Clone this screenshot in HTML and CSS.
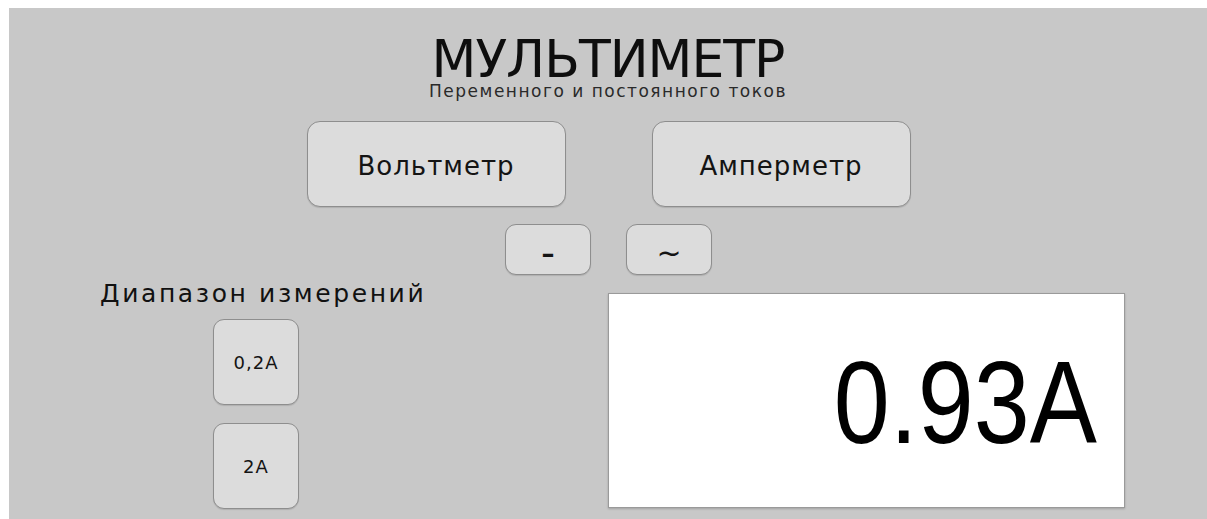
FILE: index.html
```html
<!DOCTYPE html>
<html lang="ru">
<head>
<meta charset="utf-8">
<title>Мультиметр</title>
<link rel="stylesheet" href="styles.css">
</head>
<body>
  <main class="panel">
    <header class="head">
      <h1 class="title">МУЛЬТИМЕТР</h1>
      <p class="subtitle">Переменного и постоянного токов</p>
    </header>

    <div class="modes">
      <button class="btn btn-mode">Вольтметр</button>
      <button class="btn btn-mode">Амперметр</button>
    </div>

    <div class="kinds">
      <button class="btn btn-kind btn-dc">–</button>
      <button class="btn btn-kind">~</button>
    </div>

    <section class="lower">
      <div class="ranges">
        <h2 class="ranges-label">Диапазон измерений</h2>
        <button class="btn btn-range">0,2A</button>
        <button class="btn btn-range">2A</button>
      </div>
      <div class="display">
        <span class="reading">0.93A</span>
      </div>
    </section>
  </main>
</body>
</html>
```

FILE: styles.css
```css
html {
  overflow: hidden;
  background: #ffffff;
}

body {
  margin: 8px 0 0 9px;
  font-family: "DejaVu Sans", Verdana, sans-serif;
  color: #111111;
}

.panel {
  width: 1198px;
  height: 530px;
  background: #c8c8c8;
  display: flex;
  flex-direction: column;
  align-items: center;
}

.head {
  display: flex;
  flex-direction: column;
  align-items: center;
  padding-top: 27px;
}

.title {
  margin: 0;
  font-size: 52px;
  line-height: 48px;
  font-weight: normal;
  letter-spacing: -1px;
  color: #0e0e0e;
}

.subtitle {
  margin: 0;
  font-size: 17px;
  line-height: 17px;
  letter-spacing: 1.5px;
  color: #2a2a2a;
}

.btn {
  font-family: "DejaVu Sans", Verdana, sans-serif;
  background: #dcdcdc;
  border: 1px solid #8e8e8e;
  box-shadow: 0 1px 1px rgba(0, 0, 0, 0.12);
  color: #141414;
  padding: 0;
}

.modes {
  display: flex;
  gap: 86px;
  margin-top: 21px;
  margin-left: 1px;
}

.btn-mode {
  width: 259px;
  height: 86px;
  border-radius: 13px;
  font-size: 26px;
  letter-spacing: 1px;
  padding-top: 3px;
}

.kinds {
  display: flex;
  gap: 35px;
  margin-top: 17px;
  margin-left: 1px;
}

.btn-kind {
  width: 86px;
  height: 51px;
  border-radius: 11px;
  font-size: 30px;
  line-height: 1;
  padding-top: 6px;
}

.btn-dc {
  font-weight: bold;
  font-size: 26px;
  padding-top: 8px;
}

.lower {
  align-self: stretch;
  display: flex;
  align-items: flex-start;
}

.ranges {
  width: 599px;
  display: flex;
  flex-direction: column;
  align-items: flex-start;
}

.ranges-label {
  margin: 6px 0 0 91px;
  font-size: 25px;
  line-height: 1;
  font-weight: normal;
  letter-spacing: 2.6px;
  color: #111111;
}

.btn-range {
  width: 86px;
  height: 86px;
  border-radius: 11px;
  margin-left: 204px;
  font-size: 18px;
  letter-spacing: 1px;
}

.ranges-label + .btn-range {
  margin-top: 13px;
}

.btn-range + .btn-range {
  margin-top: 18px;
}

.display {
  margin-top: 18px;
  width: 517px;
  height: 215px;
  box-sizing: border-box;
  background: #ffffff;
  border: 1px solid #9a9a9a;
  box-shadow: 0 1px 2px rgba(0, 0, 0, 0.2);
  display: flex;
  align-items: center;
  justify-content: flex-end;
  padding-right: 27px;
}

.reading {
  font-family: "Liberation Sans", Arial, sans-serif;
  font-size: 117px;
  line-height: 1;
  color: #000000;
  margin-top: 4px;
  transform: scaleX(0.86);
  transform-origin: right center;
}
```
